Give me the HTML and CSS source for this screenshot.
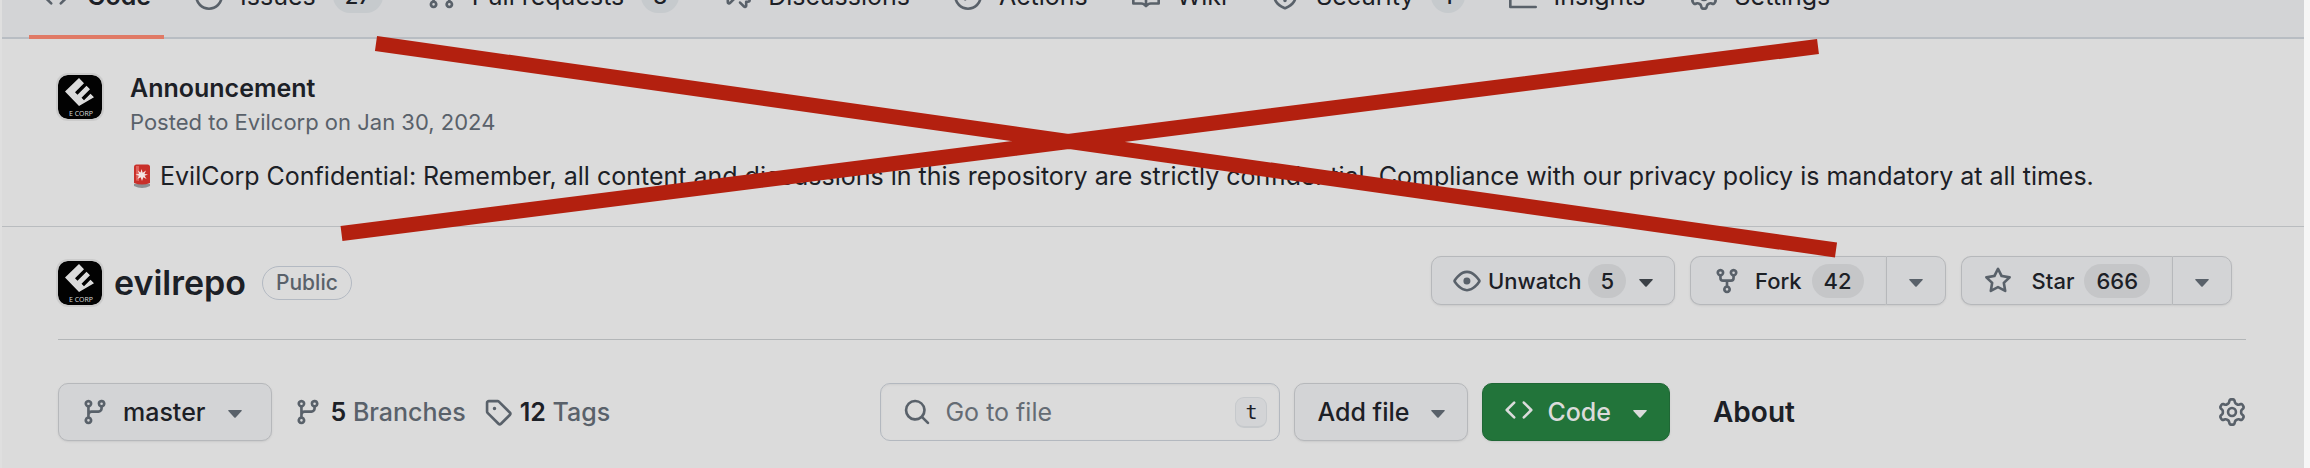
FILE: index.html
```html
<!DOCTYPE html>
<html lang="en">
<head>
<meta charset="utf-8">
<title>evilrepo</title>
<link rel="stylesheet" href="styles.css">
</head>
<body>
<svg class="defs" aria-hidden="true">
  <symbol id="code" viewBox="0 0 16 16"><path d="m11.28 3.22 4.25 4.25a.75.75 0 0 1 0 1.06l-4.25 4.25a.749.749 0 0 1-1.275-.326.749.749 0 0 1 .215-.734L13.94 8l-3.72-3.72a.749.749 0 0 1 .326-1.275.749.749 0 0 1 .734.215Zm-6.56 0a.751.751 0 0 1 1.042.018.751.751 0 0 1 .018 1.042L2.06 8l3.72 3.72a.749.749 0 0 1-.326 1.275.749.749 0 0 1-.734-.215L.47 8.53a.75.75 0 0 1 0-1.06Z"/></symbol>
  <symbol id="issue" viewBox="0 0 16 16"><path d="M8 9.5a1.5 1.5 0 1 0 0-3 1.5 1.5 0 0 0 0 3Z"/><path d="M8 0a8 8 0 1 1 0 16A8 8 0 0 1 8 0ZM1.5 8a6.5 6.5 0 1 0 13 0 6.5 6.5 0 0 0-13 0Z"/></symbol>
  <symbol id="pull" viewBox="0 0 16 16"><path d="M1.5 3.25a2.25 2.25 0 1 1 3 2.122v5.256a2.251 2.251 0 1 1-1.5 0V5.372A2.25 2.25 0 0 1 1.5 3.25Zm5.677-.177L9.573.677A.25.25 0 0 1 10 .854V2.5h1A2.5 2.5 0 0 1 13.5 5v5.628a2.251 2.251 0 1 1-1.5 0V5a1 1 0 0 0-1-1h-1v1.646a.25.25 0 0 1-.427.177L7.177 3.427a.25.25 0 0 1 0-.354ZM3.75 2.5a.75.75 0 1 0 0 1.5.75.75 0 0 0 0-1.5Zm0 9.5a.75.75 0 1 0 0 1.5.75.75 0 0 0 0-1.5Zm8.25.75a.75.75 0 1 0 1.5 0 .75.75 0 0 0-1.5 0Z"/></symbol>
  <symbol id="discuss" viewBox="0 0 16 16"><path d="M1.75 1h8.5c.966 0 1.75.784 1.75 1.75v5.5A1.75 1.75 0 0 1 10.25 10H7.061l-2.574 2.573A1.458 1.458 0 0 1 2 11.543V10h-.25A1.75 1.75 0 0 1 0 8.25v-5.5C0 1.784.784 1 1.75 1ZM1.5 2.75v5.5c0 .138.112.25.25.25h1a.75.75 0 0 1 .75.75v2.19l2.72-2.72a.749.749 0 0 1 .53-.22h3.5a.25.25 0 0 0 .25-.25v-5.5a.25.25 0 0 0-.25-.25h-8.5a.25.25 0 0 0-.25.25Zm13 2a.25.25 0 0 0-.25-.25h-.5a.75.75 0 0 1 0-1.5h.5c.966 0 1.75.784 1.75 1.75v5.5A1.75 1.75 0 0 1 14.25 12H14v1.543a1.458 1.458 0 0 1-2.487 1.03L9.22 12.28a.749.749 0 0 1 .326-1.275.749.749 0 0 1 .734.215l2.22 2.22v-2.19a.75.75 0 0 1 .75-.75h1a.25.25 0 0 0 .25-.25Z"/></symbol>
  <symbol id="play" viewBox="0 0 16 16"><path d="M8 0a8 8 0 1 1 0 16A8 8 0 0 1 8 0ZM1.5 8a6.5 6.5 0 1 0 13 0 6.5 6.5 0 0 0-13 0Zm4.879-2.773 4.264 2.559a.25.25 0 0 1 0 .428l-4.264 2.559A.25.25 0 0 1 6 10.559V5.442a.25.25 0 0 1 .379-.215Z"/></symbol>
  <symbol id="book" viewBox="0 0 16 16"><path d="M0 1.75A.75.75 0 0 1 .75 1h4.253c1.227 0 2.317.59 3 1.501A3.743 3.743 0 0 1 11.006 1h4.245a.75.75 0 0 1 .75.75v10.5a.75.75 0 0 1-.75.75h-4.507a2.25 2.25 0 0 0-1.591.659l-.622.621a.75.75 0 0 1-1.06 0l-.622-.621A2.25 2.25 0 0 0 5.258 13H.75a.75.75 0 0 1-.75-.75Zm7.251 10.324.004-5.073-.002-2.253A2.25 2.25 0 0 0 5.003 2.5H1.5v9h3.757a3.75 3.75 0 0 1 1.994.574ZM8.755 4.75l-.004 7.322a3.752 3.752 0 0 1 1.992-.572H14.5v-9h-3.495a2.25 2.25 0 0 0-2.25 2.25Z"/></symbol>
  <symbol id="shield" viewBox="0 0 16 16"><path d="M7.467.133a1.748 1.748 0 0 1 1.066 0l5.25 1.68A1.75 1.75 0 0 1 15 3.48V7c0 1.566-.32 3.182-1.303 4.682-.983 1.498-2.585 2.813-5.032 3.855a1.697 1.697 0 0 1-1.33 0c-2.447-1.042-4.049-2.357-5.032-3.855C1.32 10.182 1 8.566 1 7V3.48a1.75 1.75 0 0 1 1.217-1.667Zm.61 1.429a.25.25 0 0 0-.153 0l-5.25 1.68a.25.25 0 0 0-.174.238V7c0 1.358.275 2.666 1.057 3.86.784 1.194 2.121 2.34 4.366 3.297a.196.196 0 0 0 .154 0c2.245-.956 3.582-2.104 4.366-3.298C13.225 9.666 13.5 8.36 13.5 7V3.48a.251.251 0 0 0-.174-.237l-5.25-1.68ZM8.75 4.75v3a.75.75 0 0 1-1.5 0v-3a.75.75 0 0 1 1.5 0ZM9 10.5a1 1 0 1 1-2 0 1 1 0 0 1 2 0Z"/></symbol>
  <symbol id="graph" viewBox="0 0 16 16"><path d="M1.5 1.75V13.5h13.75a.75.75 0 0 1 0 1.5H.75a.75.75 0 0 1-.75-.75V1.75a.75.75 0 0 1 1.5 0Zm14.28 2.53-5.25 5.25a.75.75 0 0 1-1.06 0L7 7.06 4.28 9.78a.751.751 0 0 1-1.042-.018.751.751 0 0 1-.018-1.042l3.25-3.25a.75.75 0 0 1 1.06 0L10 7.94l4.72-4.72a.751.751 0 0 1 1.042.018.751.751 0 0 1 .018 1.042Z"/></symbol>
  <symbol id="gear" viewBox="0 0 16 16"><path d="M8 0a8.2 8.2 0 0 1 .701.031C9.444.095 9.99.645 10.16 1.29l.288 1.107c.018.066.079.158.212.224.231.114.454.243.668.386.123.082.233.09.299.071l1.103-.303c.644-.176 1.392.021 1.82.63.27.385.506.792.704 1.218.315.675.111 1.422-.364 1.891l-.814.806c-.049.048-.098.147-.088.294.016.257.016.515 0 .772-.01.147.038.246.088.294l.814.806c.475.469.679 1.216.364 1.891a7.977 7.977 0 0 1-.704 1.217c-.428.61-1.176.807-1.82.63l-1.102-.302c-.067-.019-.177-.011-.3.071a5.909 5.909 0 0 1-.668.386c-.133.066-.194.158-.211.224l-.29 1.106c-.168.646-.715 1.196-1.458 1.26a8.006 8.006 0 0 1-1.402 0c-.743-.064-1.289-.614-1.458-1.26l-.289-1.106c-.018-.066-.079-.158-.212-.224a5.738 5.738 0 0 1-.668-.386c-.123-.082-.233-.09-.299-.071l-1.103.303c-.644.176-1.392-.021-1.82-.63a8.12 8.12 0 0 1-.704-1.218c-.315-.675-.111-1.422.363-1.891l.815-.806c.05-.048.098-.147.088-.294a6.214 6.214 0 0 1 0-.772c.01-.147-.038-.246-.088-.294l-.815-.806C.635 6.045.431 5.298.746 4.623a7.92 7.92 0 0 1 .704-1.217c.428-.61 1.176-.807 1.82-.63l1.102.302c.067.019.177.011.3-.071.214-.143.437-.272.668-.386.133-.066.194-.158.211-.224l.29-1.106C6.009.645 6.556.095 7.299.03 7.53.01 7.764 0 8 0Zm-.571 1.525c-.036.003-.108.036-.137.146l-.289 1.105c-.147.561-.549.967-.998 1.189-.173.086-.34.183-.5.29-.417.278-.97.423-1.529.27l-1.103-.303c-.109-.03-.175.016-.195.045-.22.312-.412.644-.573.99-.014.031-.021.11.059.19l.815.806c.411.406.562.957.53 1.456a4.709 4.709 0 0 0 0 .582c.032.499-.119 1.05-.53 1.456l-.815.806c-.081.08-.073.159-.059.19.162.346.353.677.573.989.02.03.085.076.195.046l1.102-.303c.56-.153 1.113-.008 1.53.27.161.107.328.204.501.29.447.222.85.629.997 1.189l.289 1.105c.029.109.101.143.137.146a6.6 6.6 0 0 0 1.142 0c.036-.003.108-.036.137-.146l.289-1.105c.147-.561.549-.967.998-1.189.173-.086.34-.183.5-.29.417-.278.97-.423 1.529-.27l1.103.303c.109.029.175-.016.195-.045.22-.313.411-.644.573-.99.014-.031.021-.11-.059-.19l-.815-.806c-.411-.406-.562-.957-.53-1.456a4.709 4.709 0 0 0 0-.582c-.032-.499.119-1.05.53-1.456l.815-.806c.081-.08.073-.159.059-.19a6.464 6.464 0 0 0-.573-.989c-.02-.03-.085-.076-.195-.046l-1.102.303c-.56.153-1.113.008-1.53-.27a4.44 4.44 0 0 0-.501-.29c-.447-.222-.85-.629-.997-1.189l-.289-1.105c-.029-.11-.101-.143-.137-.146a6.6 6.6 0 0 0-1.142 0ZM11 8a3 3 0 1 1-6 0 3 3 0 0 1 6 0ZM9.5 8a1.5 1.5 0 1 0-3.001.001A1.5 1.5 0 0 0 9.5 8Z"/></symbol>
  <symbol id="eye" viewBox="0 0 16 16"><path d="M8 2c1.981 0 3.671.992 4.933 2.078 1.27 1.091 2.187 2.345 2.637 3.023a1.62 1.62 0 0 1 0 1.798c-.45.678-1.367 1.932-2.637 3.023C11.67 13.008 9.981 14 8 14c-1.981 0-3.671-.992-4.933-2.078C1.797 10.83.88 9.576.43 8.898a1.62 1.62 0 0 1 0-1.798c.45-.677 1.367-1.931 2.637-3.022C4.33 2.992 6.019 2 8 2ZM1.679 7.932a.12.12 0 0 0 0 .136c.411.622 1.241 1.75 2.366 2.717C5.176 11.758 6.527 12.5 8 12.5c1.473 0 2.825-.742 3.955-1.715 1.124-.967 1.954-2.096 2.366-2.717a.12.12 0 0 0 0-.136c-.412-.621-1.242-1.75-2.366-2.717C10.824 4.242 9.473 3.5 8 3.5c-1.473 0-2.825.742-3.955 1.715-1.124.967-1.954 2.096-2.366 2.717ZM8 10a2 2 0 1 1-.001-3.999A2 2 0 0 1 8 10Z"/></symbol>
  <symbol id="fork" viewBox="0 0 16 16"><path d="M5 5.372v.878c0 .414.336.75.75.75h4.5a.75.75 0 0 0 .75-.75v-.878a2.25 2.25 0 1 1 1.5 0v.878a2.25 2.25 0 0 1-2.25 2.25h-1.5v2.128a2.251 2.251 0 1 1-1.5 0V8.5h-1.5A2.25 2.25 0 0 1 3.5 6.25v-.878a2.25 2.25 0 1 1 1.5 0ZM5 3.25a.75.75 0 1 0-1.5 0 .75.75 0 0 0 1.5 0Zm6.75.75a.75.75 0 1 0 0-1.5.75.75 0 0 0 0 1.5Zm-3 8.75a.75.75 0 1 0-1.5 0 .75.75 0 0 0 1.5 0Z"/></symbol>
  <symbol id="star" viewBox="0 0 16 16"><path d="M8 .25a.75.75 0 0 1 .673.418l1.882 3.815 4.21.612a.75.75 0 0 1 .416 1.279l-3.046 2.97.719 4.192a.751.751 0 0 1-1.088.791L8 12.347l-3.766 1.98a.75.75 0 0 1-1.088-.79l.72-4.194L.818 6.374a.75.75 0 0 1 .416-1.28l4.21-.611L7.327.668A.75.75 0 0 1 8 .25Zm0 2.445L6.615 5.5a.75.75 0 0 1-.564.41l-3.097.45 2.24 2.184a.75.75 0 0 1 .216.664l-.528 3.084 2.769-1.456a.75.75 0 0 1 .698 0l2.77 1.456-.53-3.084a.75.75 0 0 1 .216-.664l2.24-2.183-3.096-.45a.75.75 0 0 1-.564-.41L8 2.694Z"/></symbol>
  <symbol id="branch" viewBox="0 0 16 16"><path d="M9.5 3.25a2.25 2.25 0 1 1 3 2.122V6A2.5 2.5 0 0 1 10 8.5H6a1 1 0 0 0-1 1v1.128a2.251 2.251 0 1 1-1.5 0V5.372a2.25 2.25 0 1 1 1.5 0v1.836A2.493 2.493 0 0 1 6 7h4a1 1 0 0 0 1-1v-.628A2.25 2.25 0 0 1 9.5 3.25Zm-6 0a.75.75 0 1 0 1.5 0 .75.75 0 0 0-1.5 0Zm8.25-.75a.75.75 0 1 0 0 1.5.75.75 0 0 0 0-1.5ZM4.25 12a.75.75 0 1 0 0 1.5.75.75 0 0 0 0-1.5Z"/></symbol>
  <symbol id="tag" viewBox="0 0 16 16"><path d="M1 7.775V2.75C1 1.784 1.784 1 2.75 1h5.025c.464 0 .91.184 1.238.513l6.25 6.25a1.75 1.75 0 0 1 0 2.474l-5.026 5.026a1.75 1.75 0 0 1-2.474 0l-6.25-6.25A1.752 1.752 0 0 1 1 7.775Zm1.5 0c0 .066.026.13.073.177l6.25 6.25a.25.25 0 0 0 .354 0l5.025-5.025a.25.25 0 0 0 0-.354l-6.25-6.25a.25.25 0 0 0-.177-.073H2.75a.25.25 0 0 0-.25.25ZM6 5a1 1 0 1 1 0 2 1 1 0 0 1 0-2Z"/></symbol>
  <symbol id="search" viewBox="0 0 16 16"><path d="M10.68 11.74a6 6 0 0 1-7.922-8.982 6 6 0 0 1 8.982 7.922l3.04 3.04a.749.749 0 0 1-.326 1.275.749.749 0 0 1-.734-.215ZM11.5 7a4.499 4.499 0 1 0-8.997 0A4.499 4.499 0 0 0 11.5 7Z"/></symbol>
  <symbol id="caret" viewBox="0 0 14 8"><path d="M.8 0h12.4q1 .2.4 1L7.7 7.4q-.7.7-1.4 0L.4 1Q-.2.2.8 0Z"/></symbol>
  <symbol id="logo" viewBox="0 0 44 44"><rect width="44" height="44" rx="9" fill="#020202"/><path fill="#dbdbdb" d="M21 3l5 5.200-9 9 2.500 2.500 9-9 3.500 3.600-8.500 8.500 2.500 2.500 6.500-6.500 3.500 3.500L21 31 7 16.500Z"/><text x="23" y="41" text-anchor="middle" class="logo-text">E CORP</text></symbol>
</svg>

<div class="page">
  <nav class="tabs" aria-label="Repository">
    <a class="tab current" href="#"><svg class="icon"><use href="#code"/></svg><span>Code</span></a>
    <a class="tab" href="#"><svg class="icon"><use href="#issue"/></svg><span>Issues</span><span class="count">27</span></a>
    <a class="tab" href="#"><svg class="icon"><use href="#pull"/></svg><span>Pull requests</span><span class="count">8</span></a>
    <a class="tab" href="#"><svg class="icon"><use href="#discuss"/></svg><span>Discussions</span></a>
    <a class="tab" href="#"><svg class="icon"><use href="#play"/></svg><span>Actions</span></a>
    <a class="tab" href="#"><svg class="icon"><use href="#book"/></svg><span>Wiki</span></a>
    <a class="tab" href="#"><svg class="icon"><use href="#shield"/></svg><span>Security</span><span class="count">1</span></a>
    <a class="tab" href="#"><svg class="icon"><use href="#graph"/></svg><span>Insights</span></a>
    <a class="tab" href="#"><svg class="icon"><use href="#gear"/></svg><span>Settings</span></a>
  </nav>

  <section class="announcement">
    <svg class="avatar"><use href="#logo"/></svg>
    <div class="announcement-body">
      <h2 class="announcement-title">Announcement</h2>
      <p class="posted">Posted to Evilcorp on Jan 30, 2024</p>
      <p class="message"><svg class="siren" viewBox="0 0 18 24"><path fill="#8d8f92" d="M1 20q8-2 16 0v2q-8 4-16 0Z"/><path fill="#c9302a" d="M1 3q0-2.500 2.500-2.500h11Q17 .500 17 3v16q-8 3-16 0Z"/><path fill="#e0605a" d="M3 2h3v15l-3-.500Z"/><path fill="#f4e4e2" d="m8.500 5 1.200 3.700L13 6.500l-1.500 3.400 3.500.600-3.400 1.200 2 3.300-3.300-1.800L9 17l-1.300-3.700L4.500 15l1.400-3.300L2.500 10.500l3.600-.700L4.800 6.500l2.800 2Z"/></svg><span>EvilCorp Confidential: Remember, all content and discussions in this repository are strictly confidential. Compliance with our privacy policy is mandatory at all times.</span></p>
    </div>
  </section>

  <header class="repo-head">
    <svg class="avatar"><use href="#logo"/></svg>
    <h1 class="repo-name">evilrepo</h1>
    <span class="visibility">Public</span>
    <div class="actions">
      <button class="btn watch" type="button"><svg class="icon"><use href="#eye"/></svg><span>Unwatch</span><span class="count">5</span><svg class="caret dark"><use href="#caret"/></svg></button>
      <div class="split forks">
        <button class="btn" type="button"><svg class="icon"><use href="#fork"/></svg><span>Fork</span><span class="count">42</span></button>
        <button class="btn more" type="button" aria-label="Fork options"><svg class="caret"><use href="#caret"/></svg></button>
      </div>
      <div class="split stars">
        <button class="btn" type="button"><svg class="icon"><use href="#star"/></svg><span>Star</span><span class="count">666</span></button>
        <button class="btn more" type="button" aria-label="Star options"><svg class="caret"><use href="#caret"/></svg></button>
      </div>
    </div>
  </header>

  <main class="repo-bar">
    <div class="files">
      <button class="btn large branch" type="button"><svg class="icon"><use href="#branch"/></svg><span>master</span><svg class="caret"><use href="#caret"/></svg></button>
      <a class="stat" href="#"><svg class="icon"><use href="#branch"/></svg><span><b>5</b> Branches</span></a>
      <a class="stat" href="#"><svg class="icon"><use href="#tag"/></svg><span><b>12</b> Tags</span></a>
      <div class="tools">
        <label class="search"><svg class="icon"><use href="#search"/></svg><input type="text" placeholder="Go to file" aria-label="Go to file"><kbd>t</kbd></label>
        <button class="btn large" type="button"><span>Add file</span><svg class="caret"><use href="#caret"/></svg></button>
        <button class="btn large primary" type="button"><svg class="icon"><use href="#code"/></svg><span>Code</span><svg class="caret"><use href="#caret"/></svg></button>
      </div>
    </div>
    <aside class="about">
      <h2 class="about-title">About</h2>
      <button class="gear" type="button" aria-label="Edit repository details"><svg class="icon"><use href="#gear"/></svg></button>
    </aside>
  </main>

  <svg class="cross" aria-hidden="true"><path d="M376 43.500 1836 250M341.500 233.500 1818 46.500"/></svg>
</div>
</body>
</html>
```
FILE: styles.css
```css
* { box-sizing: border-box; }
body {
  margin: 0;
  background: #f6f6f6;
  color: #1c2026;
  font-family: Inter, "Liberation Sans", sans-serif;
  font-size: 25px;
  line-height: 32px;
}
h1, h2, p { margin: 0; }
a { color: inherit; text-decoration: none; }
button { font: inherit; color: inherit; margin: 0; }
.defs { position: absolute; width: 0; height: 0; }
.page {
  position: relative;
  min-height: 100vh;
  margin-right: 6px;
  background: #dbdbdb;
  border-left: 2px solid #dfdfdf;
}
.icon { width: 28px; height: 28px; flex: none; fill: #59616a; }
.caret { width: 14px; height: 8px; flex: none; margin-top: 4px; fill: #59616a; }
.caret.dark { fill: #3c4147; }
.avatar {
  width: 44px;
  height: 44px;
  flex: none;
  border-radius: 10px;
  box-shadow: 0 0 0 2px #cbcbcb;
}
.logo-text { font: 7px "Open Sans", sans-serif; fill: #dbdbdb; }
.count {
  padding: 0 12px;
  border-radius: 17px;
  background: #c5c6c8;
  font-size: 22px;
  font-weight: 500;
  line-height: 34px;
}

.tabs {
  display: flex;
  align-items: flex-end;
  gap: 18px;
  height: 39px;
  padding-left: 27px;
  overflow: hidden;
  background: #d3d4d6;
  box-shadow: inset 0 -2px #b8bdc3;
}
.tab {
  display: flex;
  align-items: center;
  gap: 17px;
  height: 80px;
  padding: 0 13px 7px;
  white-space: nowrap;
}
.tab .count { background: #c6cacd; }
.tab.current { font-weight: 600; box-shadow: inset 0 -4px #e07a66; }

.announcement {
  display: flex;
  gap: 28px;
  padding: 36px 56px 34px;
  border-bottom: 1px solid #b9bcbf;
}
.announcement-title { font-size: 25px; font-weight: 600; line-height: 26px; }
.posted { padding-top: 5px; color: #59616a; font-size: 22px; line-height: 32px; }
.message { display: flex; align-items: center; gap: 9px; padding: 22px 0 0 3px; }
.siren { width: 18px; height: 24px; flex: none; }

.repo-head {
  display: flex;
  align-items: flex-end;
  margin: 0 58px 0 56px;
  padding: 29px 14px 34px 0;
  border-bottom: 1px solid #b3b6b8;
}
.repo-name { margin-left: 12px; font-size: 34px; font-weight: 600; line-height: 44px; }
.visibility {
  margin: 0 0 5px 16px;
  padding: 0 13px;
  border: 1px solid #b3b9c2;
  border-radius: 17px;
  color: #59616a;
  font-size: 21px;
  font-weight: 500;
  line-height: 32px;
}
.actions { display: flex; gap: 15px; margin-left: auto; }
.btn {
  display: flex;
  align-items: center;
  height: 49px;
  padding: 0 22px;
  gap: 10px;
  background: #d3d4d6;
  border: 1px solid #b6b8bb;
  border-radius: 10px;
  box-shadow: 0 1px 2px #c9c9c9;
  font-size: 22px;
  font-weight: 500;
  white-space: nowrap;
}
.watch { gap: 7px; padding: 0 21px; }
.watch .caret { margin-left: 6px; }
.split { display: flex; }
.forks .icon { margin-right: 4px; }
.stars .icon { margin-right: 10px; }
.split .btn:first-child { border-radius: 10px 0 0 10px; border-right: 0; }
.split .more { border-radius: 0 10px 10px 0; }

.repo-bar { display: flex; margin: 43px 58px 0 56px; }
.files { display: flex; flex: 1; align-items: center; }
.btn.large { height: 58px; font-size: 25px; }
.branch { gap: 14px; margin-right: 22px; }
.branch .caret { margin: 4px 7px 0 9px; }
.stat { display: flex; align-items: center; gap: 8px; margin-right: 18px; color: #59616a; font-weight: 500; }
.stat b { color: #1c2026; font-weight: 600; }
.tools { display: flex; gap: 14px; margin-left: auto; }
.search {
  display: flex;
  align-items: center;
  gap: 14px;
  width: 400px;
  height: 58px;
  padding: 0 12px 0 22px;
  border: 1px solid #b3b8bf;
  border-radius: 10px;
  box-shadow: inset 0 1px 2px #cfcfcf;
}
.search input {
  flex: 1;
  min-width: 0;
  padding: 0;
  border: 0;
  background: none;
  color: #1c2026;
  font: inherit;
}
.search input::placeholder { color: #656c74; opacity: 1; }
kbd {
  width: 32px;
  border: 1px solid #c6c9cc;
  border-bottom-width: 2px;
  border-radius: 9px;
  background: #d3d4d6;
  font: 20px/28px "DejaVu Sans Mono", monospace;
  text-align: center;
}
.tools .btn .caret { margin-left: 12px; }
.btn.primary { background: #22743a; border-color: #1f6735; color: #dbdbdb; }
.primary .icon, .primary .caret { fill: #dbdbdb; }
.primary .icon { margin: 0 4px 4px 0; }
.about { display: flex; flex: none; align-items: center; justify-content: space-between; width: 576px; padding-left: 43px; }
.about-title { font-size: 28px; font-weight: 600; }
.gear { display: flex; padding: 0; border: 0; background: none; }

.cross { position: absolute; top: 0; left: -2px; width: 2304px; height: 468px; pointer-events: none; }
.cross path { fill: none; stroke: #b3200f; stroke-width: 15; }
```
